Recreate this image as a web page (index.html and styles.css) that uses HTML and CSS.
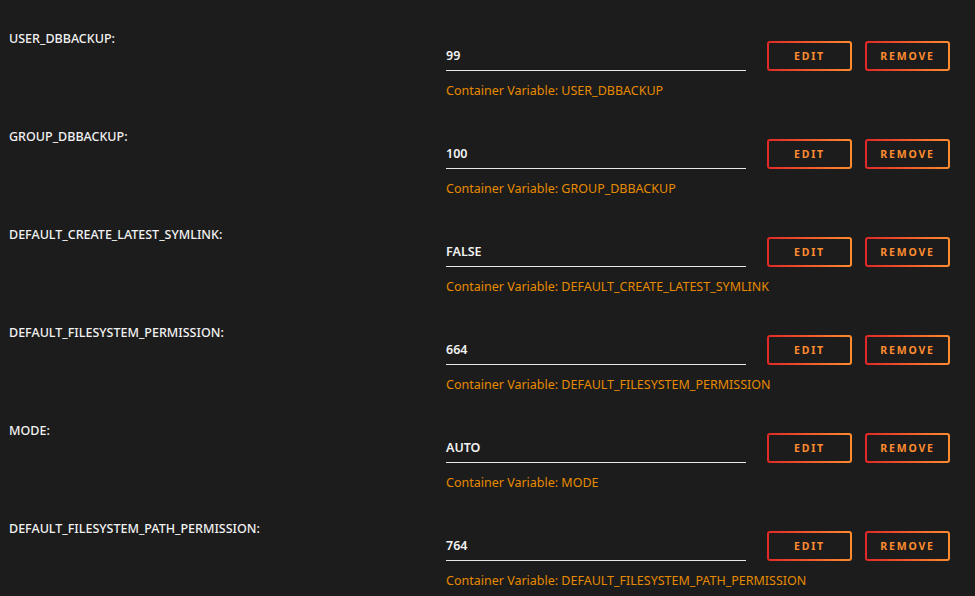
FILE: index.html
```html
<!DOCTYPE html>
<html>
<head>
<meta charset="utf-8">
<link rel="stylesheet" href="styles.css">
</head>
<body>
<div class="list">
  <div class="row">
    <div class="label">USER_DBBACKUP:</div>
    <div class="field">
      <div class="line">
        <div class="input">99</div>
        <button class="btn">EDIT</button>
        <button class="btn">REMOVE</button>
      </div>
      <div class="hint">Container Variable: USER_DBBACKUP</div>
    </div>
  </div>
  <div class="row">
    <div class="label">GROUP_DBBACKUP:</div>
    <div class="field">
      <div class="line">
        <div class="input">100</div>
        <button class="btn">EDIT</button>
        <button class="btn">REMOVE</button>
      </div>
      <div class="hint">Container Variable: GROUP_DBBACKUP</div>
    </div>
  </div>
  <div class="row">
    <div class="label">DEFAULT_CREATE_LATEST_SYMLINK:</div>
    <div class="field">
      <div class="line">
        <div class="input">FALSE</div>
        <button class="btn">EDIT</button>
        <button class="btn">REMOVE</button>
      </div>
      <div class="hint">Container Variable: DEFAULT_CREATE_LATEST_SYMLINK</div>
    </div>
  </div>
  <div class="row">
    <div class="label">DEFAULT_FILESYSTEM_PERMISSION:</div>
    <div class="field">
      <div class="line">
        <div class="input">664</div>
        <button class="btn">EDIT</button>
        <button class="btn">REMOVE</button>
      </div>
      <div class="hint">Container Variable: DEFAULT_FILESYSTEM_PERMISSION</div>
    </div>
  </div>
  <div class="row">
    <div class="label">MODE:</div>
    <div class="field">
      <div class="line">
        <div class="input">AUTO</div>
        <button class="btn">EDIT</button>
        <button class="btn">REMOVE</button>
      </div>
      <div class="hint">Container Variable: MODE</div>
    </div>
  </div>
  <div class="row">
    <div class="label">DEFAULT_FILESYSTEM_PATH_PERMISSION:</div>
    <div class="field">
      <div class="line">
        <div class="input">764</div>
        <button class="btn">EDIT</button>
        <button class="btn">REMOVE</button>
      </div>
      <div class="hint">Container Variable: DEFAULT_FILESYSTEM_PATH_PERMISSION</div>
    </div>
  </div>
</div>
</body>
</html>
```
FILE: styles.css
```css
html, body {
  margin: 0;
  padding: 0;
  background: #1c1c1c;
  font-family: "Noto Sans", "Open Sans", sans-serif;
  color: #f2f2f2;
  overflow: hidden;
}
.list {
  padding: 30px 0 0 9px;
}
.row {
  display: flex;
  height: 98px;
}
.label {
  width: 437px;
  font-size: 12.5px;
  font-weight: 500;
  line-height: 18px;
}
.field {
  display: flex;
  flex-direction: column;
  padding-top: 11px;
}
.line {
  display: flex;
  align-items: flex-end;
}
.input {
  width: 300px;
  height: 30px;
  box-sizing: border-box;
  border-bottom: 1px solid #e8e8e8;
  font-size: 12.5px;
  font-weight: 600;
  line-height: 18px;
  padding-top: 6px;
  margin-right: 21px;
}
.btn {
  width: 85px;
  height: 30px;
  margin-right: 13px;
  border: 2px solid transparent;
  border-radius: 3px;
  background: linear-gradient(#1c1c1c, #1c1c1c) padding-box,
              linear-gradient(90deg, #e22828, #ff8c2f) border-box;
  color: #ff8c2f;
  font-family: "Noto Sans", sans-serif;
  font-size: 10.5px;
  font-weight: 700;
  letter-spacing: 1.8px;
  padding: 0;
}
.hint {
  margin-top: 11px;
  font-size: 12.5px;
  line-height: 18px;
  color: #e68a00;
}
```
